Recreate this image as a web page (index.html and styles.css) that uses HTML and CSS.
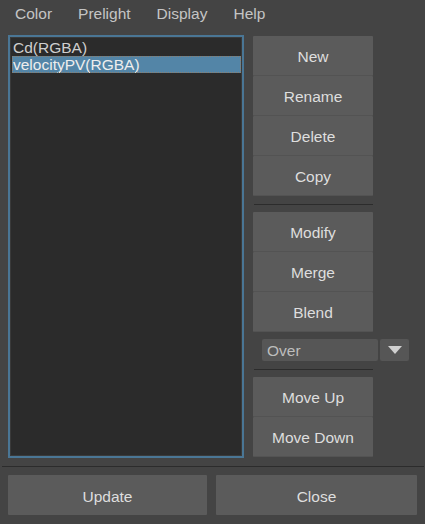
FILE: index.html
```html
<!DOCTYPE html>
<html>
<head>
<meta charset="utf-8">
<link rel="stylesheet" href="styles.css">
</head>
<body>
<div class="window">
  <div class="menubar">
    <span class="menu-item">Color</span>
    <span class="menu-item">Prelight</span>
    <span class="menu-item">Display</span>
    <span class="menu-item">Help</span>
  </div>
  <div class="main">
    <div class="list">
      <div class="list-inner">
        <div class="row">Cd(RGBA)</div>
        <div class="row selected">velocityPV(RGBA)</div>
      </div>
    </div>
    <div class="side">
      <div class="group">
        <div class="btn">New</div>
        <div class="btn">Rename</div>
        <div class="btn">Delete</div>
        <div class="btn">Copy</div>
      </div>
      <div class="sep"></div>
      <div class="group">
        <div class="btn">Modify</div>
        <div class="btn">Merge</div>
        <div class="btn">Blend</div>
      </div>
      <div class="combo">
        <div class="combo-text">Over</div>
        <div class="combo-arrow"><svg width="14" height="8" viewBox="0 0 14 8"><path d="M0 0 L14 0 L7 8 Z" fill="#d0d0d0"/></svg></div>
      </div>
      <div class="sep sep2"></div>
      <div class="group">
        <div class="btn">Move Up</div>
        <div class="btn">Move Down</div>
      </div>
    </div>
  </div>
  <div class="hsep"></div>
  <div class="footer">
    <div class="btn fbtn update">Update</div>
    <div class="btn fbtn close">Close</div>
  </div>
</div>
</body>
</html>
```
FILE: styles.css
```css
html, body {
  margin: 0;
  padding: 0;
  background: #444444;
  width: 425px;
  height: 524px;
  overflow: hidden;
}
.window {
  font-family: "Liberation Sans", Arial, sans-serif;
  font-size: 15.5px;
  color: #dcdcdc;
}
.menubar {
  display: flex;
  height: 28px;
  align-items: center;
  padding-left: 2px;
  color: #c4c4c4;
}
.menu-item {
  padding: 0 13px;
}
.main {
  display: flex;
  padding: 7px 0 0 8px;
  gap: 9px;
}
.list {
  width: 236px;
  height: 423px;
  box-sizing: border-box;
  border: 2px solid #4a7695;
  background: #2b2b2b;
}
.list-inner {
  height: 100%;
  box-sizing: border-box;
  border: 1px solid #3a3a3a;
  padding: 1px 0 0 1px;
}
.row {
  height: 17px;
  line-height: 18px;
  padding-left: 1px;
  color: #cfcfcf;
  white-space: nowrap;
}
.row.selected {
  background: #5385a7;
  color: #eeeeee;
  outline: 1px dotted #8c7e6e;
  outline-offset: -1px;
}
.side {
  display: flex;
  flex-direction: column;
  width: 120px;
  padding-top: 1px;
}
.group {
  display: flex;
  flex-direction: column;
}
.btn {
  height: 40px;
  box-sizing: border-box;
  padding-top: 2px;
  background: #5b5b5b;
  border-bottom: 1px solid #535353;
  display: flex;
  align-items: center;
  justify-content: center;
  color: #dedede;
  border-radius: 1px;
}
.sep {
  height: 1px;
  background: #2c2c2c;
  margin: 8px 0 7px 1px;
}
.sep2 {
  margin-top: 8px;
}
.combo {
  display: flex;
  width: 147px;
  height: 22px;
  margin: 7px 0 0 9px;
  gap: 2px;
}
.combo-text {
  flex: 1;
  background: #565656;
  color: #bdbdbd;
  padding-left: 5px;
  line-height: 23px;
  border-radius: 2px;
}
.combo-arrow {
  width: 29px;
  background: #565656;
  border-radius: 2px;
  display: flex;
  align-items: center;
  justify-content: center;
}
.hsep {
  height: 1px;
  background: #2c2c2c;
  margin: 8px 1px 0 2px;
}
.footer {
  display: flex;
  padding: 8px 8px 0 8px;
  gap: 9px;
}
.fbtn {
  border-bottom: none;
  padding-top: 3px;
}
.update {
  width: 199px;
}
.close {
  flex: 1;
}
```
